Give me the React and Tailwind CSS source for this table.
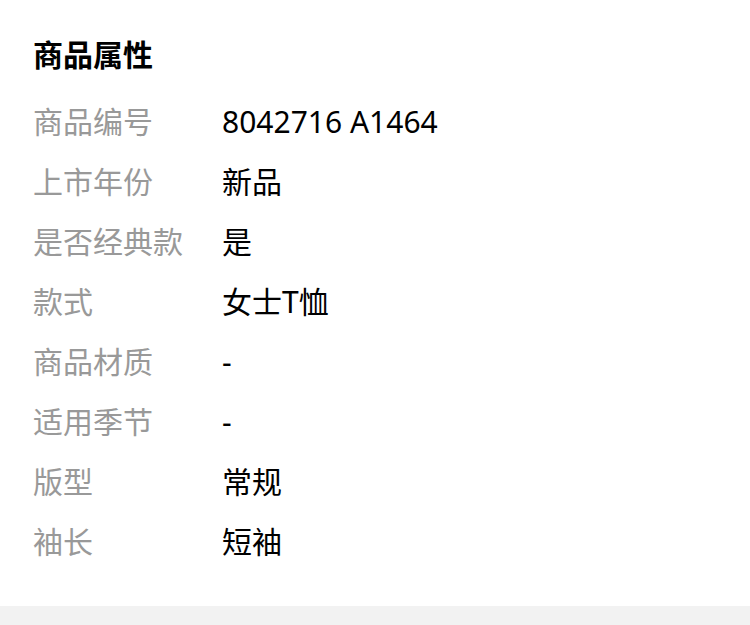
const rows = [
  ["商品编号", "8042716 A1464"],
  ["上市年份", "新品"],
  ["是否经典款", "是"],
  ["款式", "女士T恤"],
  ["商品材质", "-"],
  ["适用季节", "-"],
  ["版型", "常规"],
  ["袖长", "短袖"],
];

function App() {
  return (
    <div className="w-[750px] h-[625px] bg-white flex flex-col font-['Noto_Sans','Noto_Sans_CJK_SC',sans-serif]">
      <div className="px-[33px] pt-[40px] pb-[34px]">
        <h2 className="text-[30px] leading-[30px] font-bold text-black">商品属性</h2>
        <div className="mt-[22px] flex flex-col">
          {rows.map(([label, value]) => (
            <div key={label} className="flex h-[60px] items-center text-[30px] leading-[60px]">
              <span className="w-[189px] shrink-0 text-[#999999]">{label}</span>
              <span className="text-black">{value}</span>
            </div>
          ))}
        </div>
      </div>
      <div className="flex-1 bg-[#f2f2f2]"></div>
    </div>
  );
}

export default App;
